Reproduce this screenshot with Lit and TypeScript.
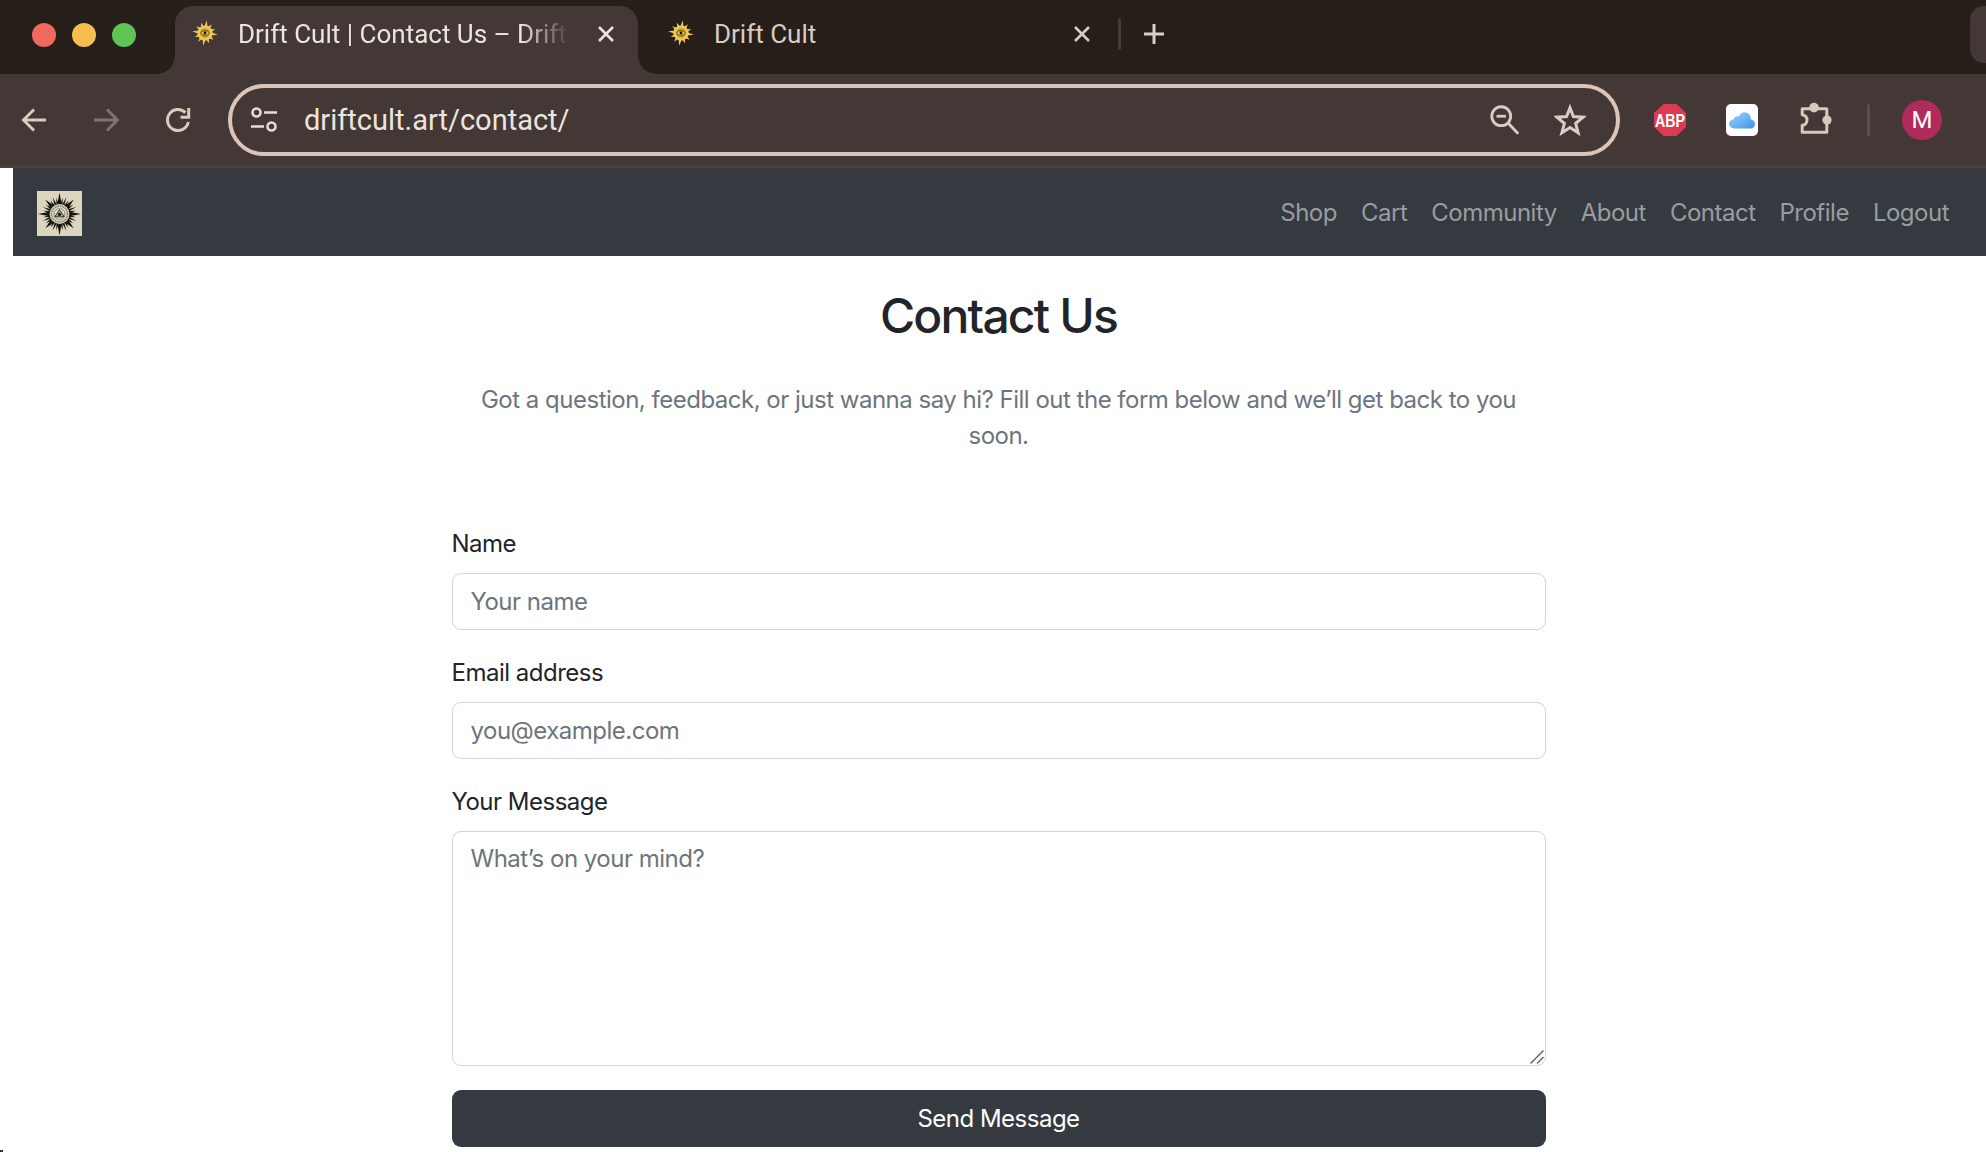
import { LitElement, html, css, svg } from "lit";
import { customElement } from "lit/decorators.js";

const sun = () => {
  const rays = [];
  const p = (r: number, t: number) => `${(13 + r * Math.sin(t)).toFixed(2)},${(13 - r * Math.cos(t)).toFixed(2)}`;
  for (let i = 0; i < 12; i++) {
    const a = ((i * 30 + 8) * Math.PI) / 180;
    const long = i % 3 === 0 ? 13 : 11;
    const s = 0.3;
    rays.push(svg`<polygon points="${p(6, a - s)} ${p(long, a)} ${p(6, a + s)}" fill="#edc554"/>`);
  }
  return html`<svg class="fav" viewBox="0 0 26 26">${rays}
    <circle cx="13" cy="13" r="7.6" fill="#f0c850"/>
    <circle cx="13" cy="13" r="4.8" fill="#c09a38"/>
    <ellipse cx="13" cy="13" rx="4.2" ry="2.2" fill="#e6c458" stroke="#3a2e14" stroke-width=".7"/>
    <circle cx="13" cy="13" r="1.4" fill="#1e1808"/></svg>`;
};

const logo = () => {
  const rays = [];
  const p = (r: number, t: number) => `${(22.5 + r * Math.sin(t)).toFixed(2)},${(23 - r * Math.cos(t)).toFixed(2)}`;
  for (let i = 0; i < 32; i++) {
    const a = (i * 11.25 * Math.PI) / 180;
    const big = i % 8 === 0 ? 21.5 : i % 4 === 0 ? 20 : i % 2 === 0 ? 18 : 16.5;
    const s = i % 4 === 0 ? 0.22 : 0.11;
    rays.push(svg`<polygon points="${p(10, a - s)} ${p(big, a)} ${p(10, a + s)}" fill="#14130f"/>`);
  }
  return html`<svg class="logo" viewBox="0 0 45 45">
    <rect width="45" height="45" fill="#dcd6bf"/>${rays}
    <circle cx="22.5" cy="23" r="10.6" fill="#2a2923"/>
    <circle cx="22.5" cy="23" r="9.9" fill="#d6d1bc"/>
    <circle cx="22.5" cy="23" r="8" fill="none" stroke="#6a675c" stroke-width="1.2" stroke-dasharray="1 .8"/>
    <circle cx="22.5" cy="23" r="5.4" fill="#e0dcc8" stroke="#6a675c" stroke-width=".6"/>
    <path d="M22.5 18.6 L27.2 25.8 H17.8 Z" fill="#a9a692" stroke="#2a2822" stroke-width=".9"/>
    <circle cx="22.5" cy="23.4" r="1.6" fill="#1c1b16"/></svg>`;
};

@customElement("app-root")
export class AppRoot extends LitElement {
  static styles = css`
    :host { display: block; width: 1986px; height: 1152px; overflow: hidden; background: #fff; position: relative; }
    * { box-sizing: border-box; }
    .strip { height: 74px; background: #261e19; display: flex; align-items: flex-start; font-family: Roboto, sans-serif; position: relative; }
    .lights { display: flex; gap: 16px; padding: 23px 0 0 32px; width: 175px; flex: none; }
    .lights i { width: 24px; height: 24px; border-radius: 50%; display: block; }
    .tab { margin-top: 6px; height: 68px; display: flex; align-items: flex-start; position: relative; flex: none; font-size: 26px; }
    .tab.on { width: 463px; background: #433835; border-radius: 18px 18px 0 0; color: #ece4df; }
    .tab.on::before, .tab.on::after { content: ""; position: absolute; bottom: 0; width: 18px; height: 18px; }
    .tab.on::before { left: -18px; background: radial-gradient(circle at 0 0, transparent 17.5px, #433835 18px); }
    .tab.on::after { right: -18px; background: radial-gradient(circle at 100% 0, transparent 17.5px, #433835 18px); }
    .tab.off { width: 467px; margin-left: 13px; color: #d8ccc5; }
    .fav { width: 26px; height: 26px; flex: none; margin: 14px 0 0 17px; }
    .title { margin: 13px 0 0 20px; line-height: 30px; white-space: nowrap; overflow: hidden; flex: none; width: 336px; }
    .on .title { -webkit-mask-image: linear-gradient(90deg, #000 84%, transparent 99%); mask-image: linear-gradient(90deg, #000 84%, transparent 99%); }
    .close { width: 20px; height: 20px; flex: none; margin: 18px 0 0 22px; }
    .sep { width: 3px; height: 32px; margin: 18px 0 0 0; background: #463b36; border-radius: 2px; flex: none; }
    .plus { width: 22px; height: 22px; margin: 23px 0 0 22px; flex: none; }
    .searchbtn { position: absolute; left: 1970px; top: 6px; width: 40px; height: 57px; border-radius: 14px; background: #433835; }
    .bar { height: 94px; background: #433835; display: flex; align-items: center; padding: 0 0 1px 10px; border-bottom: 2px solid #4a403c; font-family: Roboto, sans-serif; }
    .tool { width: 48px; height: 48px; flex: none; display: flex; align-items: center; justify-content: center; margin-right: 24px; }
    .tool svg { width: 32px; height: 32px; }
    .omni { flex: none; margin-left: 2px; width: 1392px; height: 72px; border: 4px solid #dcc5b8; border-radius: 36px; display: flex; align-items: center; padding-left: 18px; }
    .omni .tune { width: 28px; height: 28px; flex: none; }
    .url { margin-left: 26px; font-size: 29px; color: #ece4df; flex: 1; }
    .ic1 { width: 34px; height: 34px; flex: none; margin-right: 32px; }
    .ic2 { width: 32px; height: 32px; flex: none; margin-right: 30px; }
    .ext { width: 40px; height: 40px; flex: none; display: block; }
    .abp { margin-left: 30px; }
    .cloud { margin-left: 32px; }
    .puzzle { margin-left: 33px; }
    .vsep { width: 3px; height: 32px; background: #5d504a; border-radius: 2px; margin-left: 32px; flex: none; }
    .avatar { width: 40px; height: 40px; border-radius: 50%; background: #b02a5b; color: #fff; margin-left: 32px; flex: none; display: flex; align-items: center; justify-content: center; font-size: 24px; }
    .page { padding-left: 13px; font-family: Inter, sans-serif; color: #212529; letter-spacing: -0.5px; }
    nav { height: 88px; background: #343a40; display: flex; align-items: center; padding: 2px 37px 0 24px; }
    .logo { width: 45px; height: 45px; flex: none; }
    .links { margin-left: auto; display: flex; gap: 24px; font-size: 24px; color: #9a9da0; margin-top: -2px; }
    main { width: 1094px; margin: 0 auto; padding-top: 31px; transform: translateX(-1px); }
    h1 { margin: 0; font-size: 48px; line-height: 58px; font-weight: 500; text-align: center; letter-spacing: -1.8px; }
    .lead { margin: 37px 0 71px; font-size: 24px; line-height: 36px; color: #6c757d; text-align: center; }
    label { display: block; font-size: 24px; line-height: 36px; padding-top: 1px; margin-bottom: 11px; }
    input, textarea { display: block; width: 100%; border: 1.5px solid #ced4da; border-radius: 9px; font: 24px/36px Inter, sans-serif; letter-spacing: -0.5px; padding: 9px 18px; margin-bottom: 24px; color: #212529; background: #fff; outline: none; }
    input { height: 57px; }
    .ta { position: relative; margin-bottom: 24px; }
    textarea { height: 235px; resize: none; margin: 0; }
    .grip { position: absolute; right: 2px; bottom: 2px; width: 14px; height: 14px; }
    ::placeholder { color: #6c757d; opacity: 1; }
    button { display: block; width: 100%; height: 57px; background: #343a40; color: #fff; border: 0; border-radius: 9px; font: 24px/36px Inter, sans-serif; letter-spacing: -0.5px; }
    .speck { position: absolute; left: 0; bottom: 0; width: 3px; height: 2px; background: #333; }
  `;

  render() {
    const x = html`<svg class="close" viewBox="0 0 20 20"><path d="M3 3 L17 17 M17 3 L3 17" stroke="currentColor" stroke-width="2.6" fill="none"/></svg>`;
    return html`
      <div class="strip">
        <div class="lights"><i style="background:#f0695e"></i><i style="background:#f6bd4f"></i><i style="background:#5ec454"></i></div>
        <div class="tab on">${sun()}<span class="title">Drift Cult | Contact Us – Drift Cult</span>${x}</div>
        <div class="tab off">${sun()}<span class="title">Drift Cult</span>${x}</div>
        <div class="sep"></div>
        <svg class="plus" viewBox="0 0 22 22"><path d="M11 1 V21 M1 11 H21" stroke="#dccfc8" stroke-width="3" fill="none"/></svg>
        <div class="searchbtn"></div>
      </div>
      <div class="bar">
        <div class="tool"><svg viewBox="0 0 32 32"><path d="M28 16 H6 M16 5.5 L5.5 16 L16 26.5" fill="none" stroke="#dccabf" stroke-width="3"/></svg></div>
        <div class="tool"><svg viewBox="0 0 32 32"><path d="M4 16 H26.5 M17 5.5 L27.5 16 L17 26.5" fill="none" stroke="#7f7470" stroke-width="3"/></svg></div>
        <div class="tool"><svg viewBox="0 0 32 32"><path d="M26.3 18 A10.5 10.5 0 1 1 23.4 8.6" fill="none" stroke="#dccabf" stroke-width="3"/><path d="M26.7 4 V13.2 H18.5" fill="none" stroke="#dccabf" stroke-width="3"/></svg></div>
        <div class="omni">
          <svg class="tune" viewBox="0 0 28 28"><g fill="none" stroke="#e6dad3" stroke-width="2.6"><circle cx="6.5" cy="6.5" r="4"/><path d="M14 6.5 H27 M1 20.5 H14"/><circle cx="21.5" cy="20.5" r="4"/></g></svg>
          <span class="url">driftcult.art/contact/</span>
          <svg class="ic1" viewBox="0 0 36 36"><g fill="none" stroke="#d8cdc6" stroke-width="3"><circle cx="14" cy="14" r="10"/><path d="M21.5 21.5 L32 32.5"/><path d="M9 14 H19"/></g></svg>
          <svg class="ic2" viewBox="0 0 34 34"><path d="M17 4 L20.6 13.4 L31 14 L23 20.6 L25.6 30.6 L17 25 L8.4 30.6 L11 20.6 L3 14 L13.4 13.4 Z" fill="none" stroke="#d8cdc6" stroke-width="3.2" stroke-linejoin="miter"/></svg>
        </div>
        <svg class="ext abp" viewBox="0 0 40 40"><polygon points="13.5,4 26.5,4 36,13 36,27 26.5,36 13.5,36 4,27 4,13" fill="#dc3b50"/><text x="20" y="26.5" text-anchor="middle" font-family="Liberation Sans, sans-serif" font-weight="700" font-size="18" fill="#fff" textLength="30" lengthAdjust="spacingAndGlyphs">ABP</text></svg>
        <svg class="ext cloud" viewBox="0 0 40 40"><defs><linearGradient id="cl" x1="0" y1="0" x2="1" y2="1"><stop offset="0" stop-color="#9cdcf8"/><stop offset="1" stop-color="#3c8ff0"/></linearGradient></defs><rect x="4" y="4" width="32" height="32" rx="5" fill="#fff"/><path d="M12.5 28.5 C8.8 28.5 7 26 7 23.6 C7 21.2 9 19.3 11.4 19.4 C12 16.8 14.6 15.6 16.6 16.4 C18 13.4 21 11.6 24 12.4 C27.4 13.2 29 16.2 28.8 19.2 C31.6 19.8 33 21.8 33 24 C33 26.6 31 28.5 28.4 28.5 Z" fill="url(#cl)"/></svg>
        <svg class="ext puzzle" viewBox="0 0 40 40"><circle cx="19" cy="7.6" r="4.8" fill="#d8c8be"/><circle cx="32" cy="20" r="4.6" fill="#d8c8be"/><path d="M7.2 8.7 H31.8 V32.3 H7.2 V25.3 C13.6 24.6 13.6 15.4 7.2 14.7 Z" fill="none" stroke="#d8c8be" stroke-width="3" stroke-linejoin="round"/></svg>
        <div class="vsep"></div>
        <div class="avatar">M</div>
      </div>
      <div class="page">
        <nav>
          ${logo()}
          <div class="links"><span>Shop</span><span>Cart</span><span>Community</span><span>About</span><span>Contact</span><span>Profile</span><span>Logout</span></div>
        </nav>
        <main>
          <h1>Contact Us</h1>
          <p class="lead">Got a question, feedback, or just wanna say hi? Fill out the form below and we’ll get back to you<br>soon.</p>
          <label>Name</label>
          <input placeholder="Your name" />
          <label>Email address</label>
          <input placeholder="you@example.com" />
          <label>Your Message</label>
          <div class="ta">
            <textarea placeholder="What’s on your mind?"></textarea>
            <svg class="grip" viewBox="0 0 14 14"><path d="M0.5 13.5 L13.5 0.5 M7 13.5 L13.5 7" stroke="#666" stroke-width="1.5" fill="none"/></svg>
          </div>
          <button>Send Message</button>
        </main>
      </div>
      <div class="speck"></div>
    `;
  }
}
